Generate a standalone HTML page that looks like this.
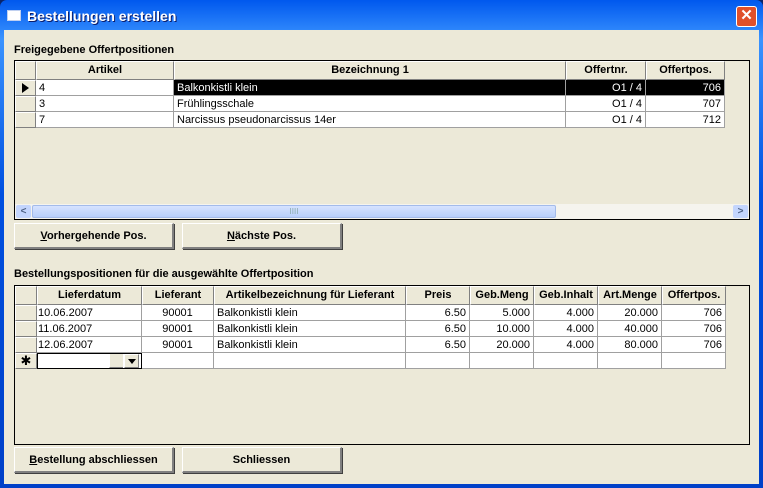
<html><head><style>
*{margin:0;padding:0;box-sizing:border-box}
body{width:763px;height:488px;overflow:hidden;background:#0A246A;font-family:"Liberation Sans",Arial,sans-serif;font-size:11px;position:relative}
.a{position:absolute}
#win{left:0;top:0;width:763px;height:488px;background:linear-gradient(#0058EE,#3A93FF 8%,#0050E0 40%,#0040C8);border-radius:7px 7px 0 0}
#client{left:4px;top:30px;width:755px;height:454px;background:#ECE9D8}
.title{left:27px;top:8px;color:#fff;font-weight:bold;font-size:14px;text-shadow:1px 1px #0a1c6a}
.close{left:736px;top:6px;width:21px;height:21px;background:#E0502A;border:1px solid #fff;border-radius:3px;color:#fff;text-align:center;font-weight:bold;font-size:15px;line-height:18px}
.lbl{font-weight:bold;color:#000;font-size:11px}
.box{border:1px solid #000;background:#ECE9D8}
.hc{position:absolute;background:#ECE9D8;border-right:1px solid #808080;border-bottom:1px solid #808080;border-left:1px solid #fff;border-top:1px solid #fff;font-weight:bold;text-align:center;line-height:17px;height:19px}
.c{position:absolute;background:#fff;border-right:1px solid #A0A0A0;border-bottom:1px solid #A0A0A0;height:16px;line-height:16px;padding:0 3px;white-space:nowrap;overflow:hidden}
.r{text-align:right}
.sel{background:#000;color:#fff}
.rs{position:absolute;background:#ECE9D8;border-right:1px solid #808080;border-bottom:1px solid #808080;border-left:1px solid #fff;border-top:1px solid #fff;height:16px;width:21px}
.btn{position:absolute;background:#ECE9D8;border:1px solid #fff;border-right:2px solid #808080;border-bottom:2px solid #808080;font-weight:bold;text-align:center;line-height:24px;font-size:11px;height:26px;width:160px;box-shadow:1px 1px 0 #404040}
</style></head><body>
<div id="win" class="a"></div>
<div class="a" style="left:7px;top:10px;width:14px;height:11px;background:#fff;border:1px solid #c0d0f0"></div>
<div class="a title">Bestellungen erstellen</div>
<div class="a close">✕</div>
<div id="client" class="a"></div>

<div class="a lbl" style="left:14px;top:44px">Freigegebene Offertpositionen</div>
<div class="a box" style="left:14px;top:60px;width:736px;height:160px"></div>
<div class="hc" style="left:15px;top:61px;width:21px"></div>
<div class="hc" style="left:36px;top:61px;width:138px">Artikel</div>
<div class="hc" style="left:174px;top:61px;width:392px">Bezeichnung 1</div>
<div class="hc" style="left:566px;top:61px;width:80px">Offertnr.</div>
<div class="hc" style="left:646px;top:61px;width:79px">Offertpos.</div>

<div class="rs" style="left:15px;top:80px"><div class="a" style="left:6px;top:2px;width:0;height:0;border-left:7px solid #000;border-top:5px solid transparent;border-bottom:5px solid transparent"></div></div>
<div class="c" style="left:36px;top:80px;width:138px">4</div>
<div class="c sel" style="left:174px;top:80px;width:392px">Balkonkistli klein</div>
<div class="c sel r" style="left:566px;top:80px;width:80px">O1 / 4</div>
<div class="c sel r" style="left:646px;top:80px;width:79px">706</div>

<div class="rs" style="left:15px;top:96px"></div>
<div class="c" style="left:36px;top:96px;width:138px">3</div>
<div class="c" style="left:174px;top:96px;width:392px">Frühlingsschale</div>
<div class="c r" style="left:566px;top:96px;width:80px">O1 / 4</div>
<div class="c r" style="left:646px;top:96px;width:79px">707</div>

<div class="rs" style="left:15px;top:112px"></div>
<div class="c" style="left:36px;top:112px;width:138px">7</div>
<div class="c" style="left:174px;top:112px;width:392px">Narcissus pseudonarcissus 14er</div>
<div class="c r" style="left:566px;top:112px;width:80px">O1 / 4</div>
<div class="c r" style="left:646px;top:112px;width:79px">712</div>

<div class="a" style="left:15px;top:204px;width:734px;height:15px;background:#F5F4EE"></div>
<div class="a" style="left:16px;top:205px;width:15px;height:13px;background:#C3D5FD;border-radius:2px;color:#4D6185;font-size:10px;line-height:13px;text-align:center;font-weight:bold">&lt;</div>
<div class="a" style="left:32px;top:205px;width:524px;height:13px;background:linear-gradient(#D6E3FF,#B8CFFB);border:1px solid #A3BBEA;border-radius:2px;color:#8aa;font-size:8px;text-align:center;line-height:11px">IIII</div>
<div class="a" style="left:733px;top:205px;width:15px;height:13px;background:#C3D5FD;border-radius:2px;color:#4D6185;font-size:10px;line-height:13px;text-align:center;font-weight:bold">&gt;</div>

<div class="btn" style="left:14px;top:223px"><u>V</u>orhergehende Pos.</div>
<div class="btn" style="left:182px;top:223px"><u>N</u>ächste Pos.</div>

<div class="a lbl" style="left:14px;top:268px">Bestellungspositionen für die ausgewählte Offertposition</div>
<div class="a box" style="left:14px;top:285px;width:736px;height:160px"></div>
<div class="hc" style="left:15px;top:286px;width:22px"></div>
<div class="hc" style="left:37px;top:286px;width:105px">Lieferdatum</div>
<div class="hc" style="left:142px;top:286px;width:72px">Lieferant</div>
<div class="hc" style="left:214px;top:286px;width:192px">Artikelbezeichnung für Lieferant</div>
<div class="hc" style="left:406px;top:286px;width:64px">Preis</div>
<div class="hc" style="left:470px;top:286px;width:64px">Geb.Meng</div>
<div class="hc" style="left:534px;top:286px;width:64px">Geb.Inhalt</div>
<div class="hc" style="left:598px;top:286px;width:64px">Art.Menge</div>
<div class="hc" style="left:662px;top:286px;width:64px">Offertpos.</div>

<div class="rs" style="left:15px;top:305px;width:22px"></div>
<div class="c" style="left:37px;top:305px;width:105px;padding-left:1px">10.06.2007</div>
<div class="c" style="left:142px;top:305px;width:72px;text-align:center">90001</div>
<div class="c" style="left:214px;top:305px;width:192px">Balkonkistli klein</div>
<div class="c r" style="left:406px;top:305px;width:64px">6.50</div>
<div class="c r" style="left:470px;top:305px;width:64px">5.000</div>
<div class="c r" style="left:534px;top:305px;width:64px">4.000</div>
<div class="c r" style="left:598px;top:305px;width:64px">20.000</div>
<div class="c r" style="left:662px;top:305px;width:64px">706</div>

<div class="rs" style="left:15px;top:321px;width:22px"></div>
<div class="c" style="left:37px;top:321px;width:105px;padding-left:1px">11.06.2007</div>
<div class="c" style="left:142px;top:321px;width:72px;text-align:center">90001</div>
<div class="c" style="left:214px;top:321px;width:192px">Balkonkistli klein</div>
<div class="c r" style="left:406px;top:321px;width:64px">6.50</div>
<div class="c r" style="left:470px;top:321px;width:64px">10.000</div>
<div class="c r" style="left:534px;top:321px;width:64px">4.000</div>
<div class="c r" style="left:598px;top:321px;width:64px">40.000</div>
<div class="c r" style="left:662px;top:321px;width:64px">706</div>

<div class="rs" style="left:15px;top:337px;width:22px"></div>
<div class="c" style="left:37px;top:337px;width:105px;padding-left:1px">12.06.2007</div>
<div class="c" style="left:142px;top:337px;width:72px;text-align:center">90001</div>
<div class="c" style="left:214px;top:337px;width:192px">Balkonkistli klein</div>
<div class="c r" style="left:406px;top:337px;width:64px">6.50</div>
<div class="c r" style="left:470px;top:337px;width:64px">20.000</div>
<div class="c r" style="left:534px;top:337px;width:64px">4.000</div>
<div class="c r" style="left:598px;top:337px;width:64px">80.000</div>
<div class="c r" style="left:662px;top:337px;width:64px">706</div>

<div class="rs" style="left:15px;top:353px;width:22px;text-align:center;line-height:14px;font-size:13px">✱</div>
<div class="c" style="left:37px;top:353px;width:105px;border:1px solid #000;padding:0"></div>
<div class="a" style="left:109px;top:354px;width:14px;height:14px;background:#ECE9D8;border-left:1px solid #fff;border-bottom:1px solid #808080"></div>
<div class="a" style="left:124px;top:354px;width:15px;height:14px;background:#ECE9D8;border:1px solid #fff;border-right-color:#808080;border-bottom-color:#808080"><div class="a" style="left:3px;top:4px;border-top:5px solid #000;border-left:4px solid transparent;border-right:4px solid transparent"></div></div>
<div class="c" style="left:142px;top:353px;width:72px"></div>
<div class="c" style="left:214px;top:353px;width:192px"></div>
<div class="c" style="left:406px;top:353px;width:64px"></div>
<div class="c" style="left:470px;top:353px;width:64px"></div>
<div class="c" style="left:534px;top:353px;width:64px"></div>
<div class="c" style="left:598px;top:353px;width:64px"></div>
<div class="c" style="left:662px;top:353px;width:64px"></div>

<div class="btn" style="left:14px;top:447px"><u>B</u>estellung abschliessen</div>
<div class="btn" style="left:182px;top:447px">Schliessen</div>
</body></html>
